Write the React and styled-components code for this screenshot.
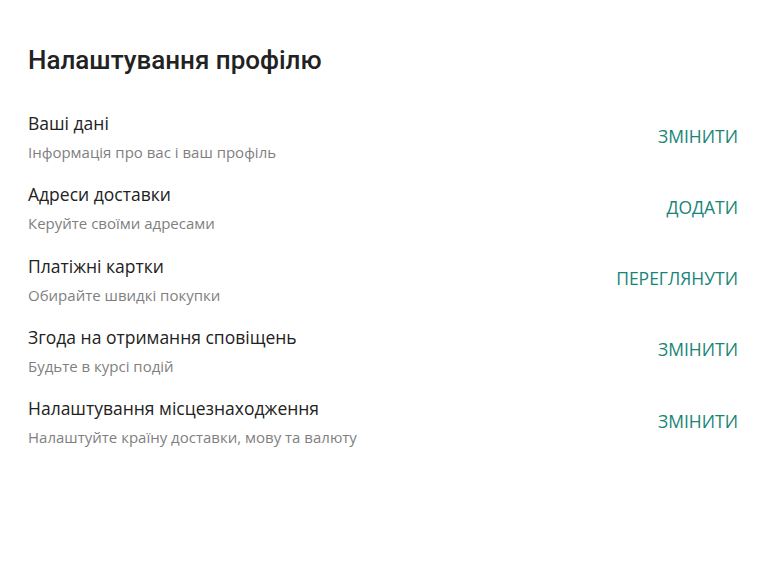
import React from "react";
import styled, { createGlobalStyle } from "styled-components";

const GlobalStyle = createGlobalStyle`
  html, body {
    margin: 0;
    padding: 0;
    background: #fff;
  }
`;

const items = [
  { title: "Ваші дані", hint: "Інформація про вас і ваш профіль", action: "ЗМІНИТИ" },
  { title: "Адреси доставки", hint: "Керуйте своїми адресами", action: "ДОДАТИ" },
  { title: "Платіжні картки", hint: "Обирайте швидкі покупки", action: "ПЕРЕГЛЯНУТИ" },
  { title: "Згода на отримання сповіщень", hint: "Будьте в курсі подій", action: "ЗМІНИТИ" },
  { title: "Налаштування місцезнаходження", hint: "Налаштуйте країну доставки, мову та валюту", action: "ЗМІНИТИ" },
];

const App = () => {
  return (
    <Page>
      <GlobalStyle />
      <Heading>Налаштування профілю</Heading>
      <List>
        {items.map((item) => (
          <Row key={item.title}>
            <Texts>
              <Title>{item.title}</Title>
              <Hint>{item.hint}</Hint>
            </Texts>
            <Action type="button">{item.action}</Action>
          </Row>
        ))}
      </List>
    </Page>
  );
};

const Page = styled.main`
  padding: 45px 28px 0 28px;
  font-family: "Open Sans", "Liberation Sans", sans-serif;
`;

const Heading = styled.h1`
  margin: 0;
  font-family: Roboto, "Liberation Sans", sans-serif;
  font-size: 26px;
  line-height: 30px;
  font-weight: 500;
  color: #222;
`;

const List = styled.ul`
  list-style: none;
  margin: 36px 0 0 0;
  padding: 0;
  display: flex;
  flex-direction: column;
  gap: 20.25px;
`;

const Row = styled.li`
  display: flex;
  justify-content: space-between;
  align-items: center;
`;

const Texts = styled.div`
  display: flex;
  flex-direction: column;
  gap: 7px;
`;

const Title = styled.div`
  font-size: 17.5px;
  line-height: 24px;
  color: #222;
`;

const Hint = styled.div`
  font-size: 15px;
  line-height: 20px;
  color: #7f7f7f;
`;

const Action = styled.button`
  border: 0;
  background: none;
  padding: 0;
  margin-bottom: 2px;
  font-family: "Open Sans", "Liberation Sans", sans-serif;
  font-size: 17.5px;
  line-height: 24px;
  color: #178577;
  cursor: pointer;
`;

export default App;
